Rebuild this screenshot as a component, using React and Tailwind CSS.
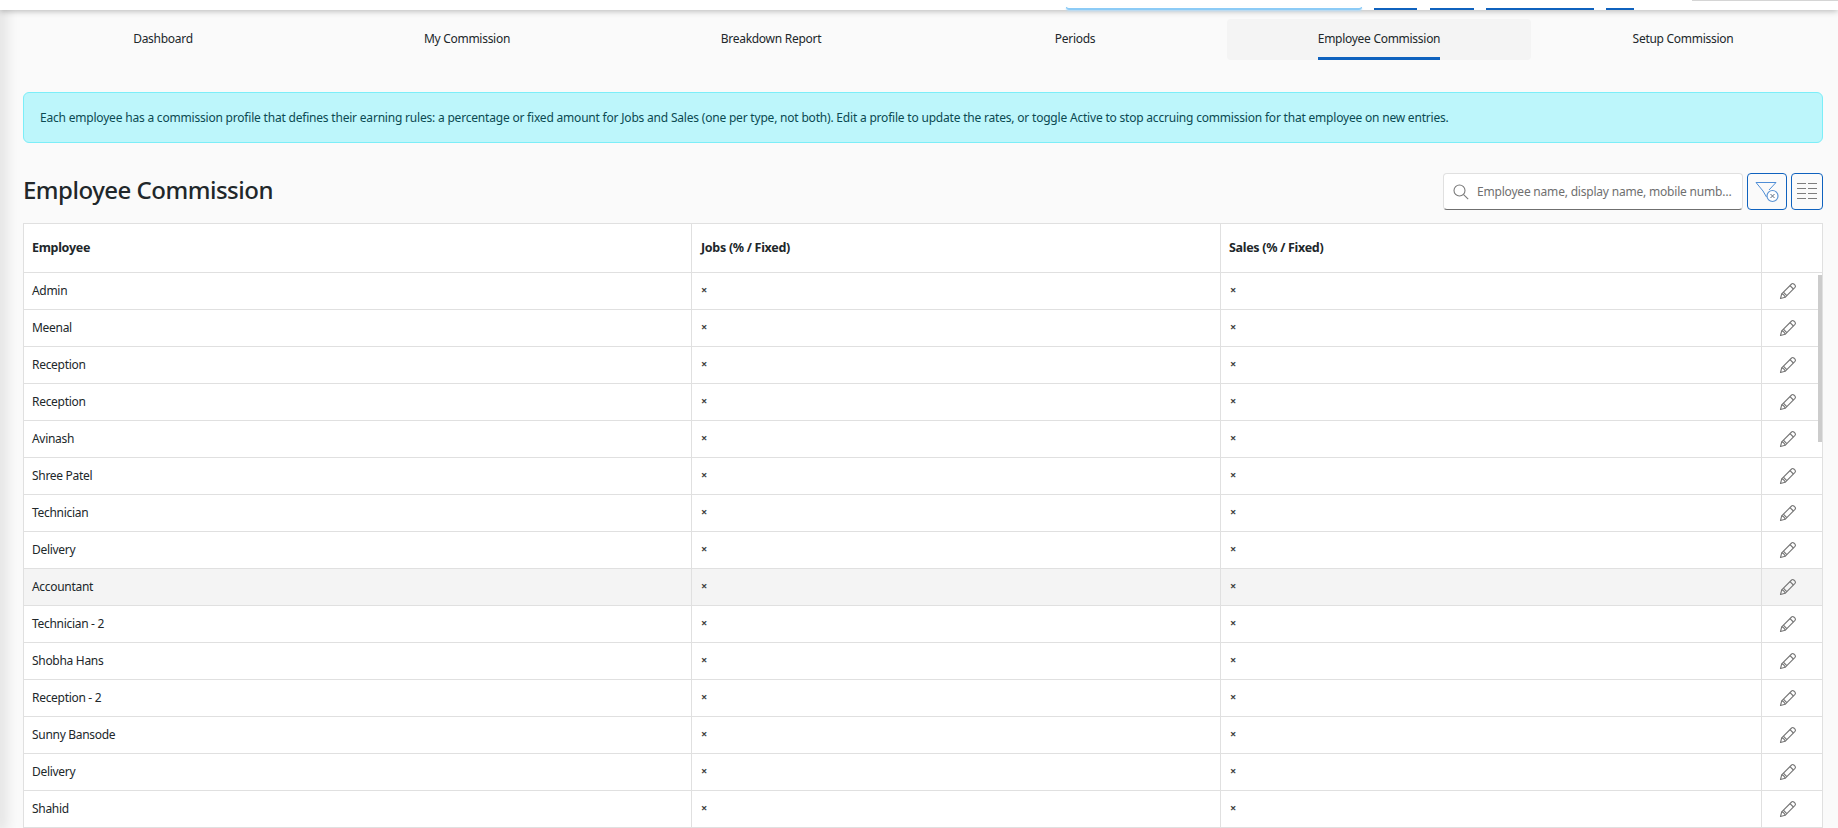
const tabs = ["Dashboard", "My Commission", "Breakdown Report", "Periods", "Employee Commission", "Setup Commission"];
const rows = ["Admin", "Meenal", "Reception", "Reception", "Avinash", "Shree Patel", "Technician", "Delivery", "Accountant", "Technician - 2", "Shobha Hans", "Reception - 2", "Sunny Bansode", "Delivery", "Shahid"];

function Pencil() {
  return (
    <svg width="18" height="18" viewBox="0 0 18 18" fill="none" stroke="#757575" strokeWidth="1.1" strokeLinejoin="round">
      <path d="M1.5 16.5l1.2-4.6L12.6 2a1.6 1.6 0 0 1 2.2 0l1.2 1.2a1.6 1.6 0 0 1 0 2.2L6.1 15.3z" />
      <path d="M2.7 11.9c1.4 0 3.4 2 3.4 3.4M11 3.6l3.4 3.4M4.4 10.2l3.4 3.4" />
    </svg>
  );
}

function FilterX() {
  return (
    <svg width="24" height="22" viewBox="0 0 24 22" fill="none" strokeWidth="1">
      <path d="M1 1.5h20l-7 7.5M1 1.5l7 8.5 3.5 6" stroke="#4f8ed6" />
      <circle cx="17.5" cy="15" r="5.5" stroke="#5b93d3" strokeWidth="1.2" fill="#fff" />
      <path d="M15.5 13l4 4M19.5 13l-4 4" stroke="#5f6f82" />
    </svg>
  );
}

function ColumnsIcon() {
  return (
    <svg className="mb-[2px]" width="20" height="16" viewBox="0 0 20 16" stroke="#7d7d7d" strokeWidth="1" fill="none">
      <path d="M0 .5h9M11 .5h9M0 5.5h9M11 5.5h9M0 10.5h9M11 10.5h9M0 15.5h9M11 15.5h9" />
    </svg>
  );
}

function SearchIcon() {
  return (
    <svg className="shrink-0" width="16" height="16" viewBox="0 0 16 16" fill="none" stroke="#7a7a7a" strokeWidth="1.1">
      <circle cx="6.5" cy="6.5" r="5.5" />
      <path d="M10.6 10.6l4.6 4.6" />
    </svg>
  );
}

const cols = "grid grid-cols-[668px_529px_541px_61px]";
const cell = "border-r border-[#e0e0e0] flex items-center";

export default function App() {
  return (
    <div className="relative h-[828px] w-[1838px] overflow-hidden bg-[#fafafa] text-[#21272a] font-['Noto_Sans',sans-serif]">
      <div className="absolute left-0 top-0 h-full w-0 shadow-[0_0_14px_4px_rgba(0,0,0,0.16)]" />
      <header className="relative z-10 flex h-[10px] items-end bg-white pl-[1066px] shadow-[0_1px_6px_rgba(0,0,0,0.28)]">
        <div className="h-[3px] w-[296px] rounded-b-md border-b-2 border-x border-[#8ccbf6] shadow-[0_1px_2px_#b5defa]" />
        <div className="ml-[12px] h-[2px] w-[43px] bg-[#0f62be]" />
        <div className="ml-[13px] h-[2px] w-[44px] bg-[#0f62be]" />
        <div className="ml-[12px] h-[2px] w-[108px] bg-[#0f62be]" />
        <div className="ml-[12px] h-[2px] w-[28px] bg-[#0f62be]" />
        <div className="ml-[58px] mb-[9px] h-px w-[146px] bg-[#d5d5d5]" />
      </header>

      <main className="pl-[23px] pr-[15px]">
        <nav className="-ml-3 mt-[9px] grid h-[41px] w-[1824px] grid-cols-6 text-[12px] tracking-[-0.28px]">
          {tabs.map((t) => {
            const active = t === "Employee Commission";
            return (
              <div key={t} className={`flex justify-center rounded ${active ? "bg-[#f4f4f4]" : ""}`}>
                <span className={`flex h-full items-center pt-[2px] ${active ? "border-b-[3px] border-[#0f62be]" : "pb-[3px]"}`}>{t}</span>
              </div>
            );
          })}
        </nav>

        <div className="mt-8 flex h-[51px] items-center rounded-md border border-[#7ceef8] bg-[#bdf6fb] pl-4 text-[12px] tracking-[-0.2px] text-[#0b4a52]">
          Each employee has a commission profile that defines their earning rules: a percentage or fixed amount for Jobs and Sales (one per type, not both). Edit a profile to update the rates, or toggle Active to stop accruing commission for that employee on new entries.
        </div>

        <div className="mt-[30px] flex h-[37px] items-center justify-between">
          <h1 className="-mt-1 text-[24px] font-medium tracking-[-0.5px] text-[#21272a]">Employee Commission</h1>
          <div className="flex h-[37px] items-stretch">
            <div className="flex w-[300px] items-center gap-[8px] rounded border border-[#e0e0e0] border-b-[#6f6f6f] bg-white pl-[9px] pr-2">
              <SearchIcon />
              <span className="whitespace-nowrap text-[12px] tracking-[-0.2px] text-[#6f6f6f]">Employee name, display name, mobile numb…</span>
            </div>
            <button className="ml-1 flex w-10 items-center justify-center rounded border border-[#0f62be]">
              <FilterX />
            </button>
            <button className="ml-1 flex w-8 items-center justify-center rounded border border-[#0f62be]">
              <ColumnsIcon />
            </button>
          </div>
        </div>

        <div className="relative mt-[13px] w-[1800px] border border-[#e0e0e0] bg-white text-[12px] tracking-[-0.3px]">
          <div className={`${cols} h-[49px] border-b border-[#e0e0e0] text-[12.5px] font-bold`}>
            <div className={`${cell} pl-[8px]`}>Employee</div>
            <div className={`${cell} pl-[9px]`}>Jobs (% / Fixed)</div>
            <div className={`${cell} pl-[8px]`}>Sales (% / Fixed)</div>
            <div />
          </div>
          {rows.map((r, i) => (
            <div key={i} className={`${cols} h-[37px] border-b border-[#e0e0e0] ${r === "Accountant" ? "bg-[#f4f4f4]" : ""}`}>
              <div className={`${cell} pb-px pl-[8px]`}>{r}</div>
              <div className={`${cell} pb-px pl-[9px] text-[11px] font-bold text-[#444]`}>×</div>
              <div className={`${cell} pb-px pl-[9px] text-[11px] font-bold text-[#444]`}>×</div>
              <div className="flex items-center pb-px pl-[17px]"><Pencil /></div>
            </div>
          ))}
          <div className="absolute right-0 top-[51px] h-[167px] w-1 bg-[#cccccc]" />
        </div>
      </main>
    </div>
  );
}
